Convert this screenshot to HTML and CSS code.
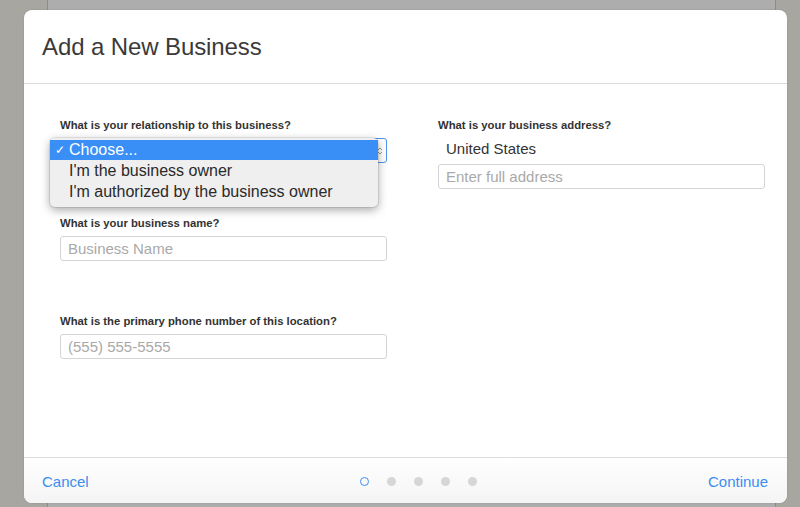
FILE: index.html
```html
<!DOCTYPE html>
<html>
<head>
<meta charset="utf-8">
<link rel="stylesheet" href="styles.css">
</head>
<body>
<div class="modal">
  <div class="modal-header">
    <h1 class="title">Add a New Business</h1>
  </div>
  <div class="modal-body">
    <div class="column">
      <div class="field">
        <label class="label">What is your relationship to this business?</label>
        <div class="select-wrap">
          <div class="select">
            <span class="select-arrows"><svg width="6" height="10" viewBox="0 0 6 10"><path d="M1 4 L3 2 L5 4 M1 6 L3 8 L5 6" fill="none" stroke="#999" stroke-width="1"/></svg></span>
          </div>
          <ul class="dropdown">
            <li class="option selected"><span class="check">✓</span>Choose...</li>
            <li class="option">I'm the business owner</li>
            <li class="option">I'm authorized by the business owner</li>
          </ul>
        </div>
      </div>
      <div class="field">
        <label class="label">What is your business name?</label>
        <input class="input" type="text" placeholder="Business Name">
      </div>
      <div class="field">
        <label class="label">What is the primary phone number of this location?</label>
        <input class="input" type="text" placeholder="(555) 555-5555">
      </div>
    </div>
    <div class="column">
      <div class="field">
        <label class="label">What is your business address?</label>
        <div class="country">United States</div>
        <input class="input" type="text" placeholder="Enter full address">
      </div>
    </div>
  </div>
  <div class="modal-footer">
    <a class="link">Cancel</a>
    <div class="dots">
      <span class="dot current"></span>
      <span class="dot"></span>
      <span class="dot"></span>
      <span class="dot"></span>
      <span class="dot"></span>
    </div>
    <a class="link">Continue</a>
  </div>
</div>
</body>
</html>
```
FILE: styles.css
```css
html, body {
  margin: 0;
  padding: 0;
}
body {
  width: 800px;
  height: 507px;
  overflow: hidden;
  font-family: "Liberation Sans", Arial, sans-serif;
  background: linear-gradient(to right, #a8a6a1 0 47px, #8e8c88 47px 48px, #adadad 48px 775px, #8e8c88 775px 776px, #a8a6a1 776px);
  padding-top: 10px;
  box-sizing: border-box;
}
.modal {
  margin-left: 24px;
  width: 763px;
  height: 493px;
  background: #fff;
  border-radius: 8px;
  display: flex;
  flex-direction: column;
  box-shadow: 0 0 2px rgba(0,0,0,0.15);
}
.modal-header {
  height: 73px;
  border-bottom: 1px solid #dcdcdc;
  display: flex;
  align-items: center;
  padding-left: 18px;
}
.title {
  margin: 0;
  font-size: 24px;
  font-weight: 400;
  color: #3a3a3a;
  letter-spacing: -0.1px;
}
.modal-body {
  flex: 1;
  display: grid;
  grid-template-columns: 327px 327px;
  column-gap: 51px;
  padding: 34px 22px 0 36px;
}
.column {
  display: flex;
  flex-direction: column;
  gap: 53px;
}
.field {
  display: flex;
  flex-direction: column;
}
.label {
  font-size: 11.3px;
  font-weight: 700;
  line-height: 14px;
  color: #333;
  margin-bottom: 6px;
}
.select-wrap {
  position: relative;
  height: 25px;
}
.select {
  height: 25px;
  box-sizing: border-box;
  border: 1px solid #4c96ee;
  border-radius: 3px;
  display: flex;
  justify-content: flex-end;
  align-items: center;
  padding-right: 3px;
}
.select-arrows {
  display: flex;
}
.dropdown {
  position: absolute;
  left: -10px;
  top: 0;
  width: 328px;
  margin: 0;
  padding: 2px 0 5px;
  list-style: none;
  background: #efefef;
  border-radius: 5px;
  box-shadow: 0 3px 10px rgba(0,0,0,0.35), 0 0 0 1px rgba(0,0,0,0.08);
}
.option {
  height: 21px;
  line-height: 21px;
  font-size: 16px;
  color: #2a2a2a;
  padding-left: 19px;
  position: relative;
}
.option.selected {
  background: #3a8ff7;
  color: #fff;
  height: 20px;
  line-height: 20px;
}
.check {
  position: absolute;
  left: 5px;
  font-size: 12px;
}
.input {
  height: 25px;
  box-sizing: border-box;
  border: 1px solid #d4d4d4;
  border-radius: 3px;
  padding: 0 7px;
  font-family: "Liberation Sans", Arial, sans-serif;
  font-size: 15px;
  color: #333;
  outline: none;
  margin: 0;
}
.input::placeholder {
  color: #a9a9a9;
}
.country {
  font-size: 15px;
  color: #333;
  padding-left: 8px;
  line-height: 18px;
  margin-top: 2px;
  margin-bottom: 6px;
}
.modal-footer {
  height: 46px;
  box-sizing: border-box;
  padding: 2px 19px 0 18px;
  border-top: 1px solid #dcdcdc;
  border-radius: 0 0 8px 8px;
  background: linear-gradient(#fff, #f4f4f4);
  display: flex;
  align-items: center;
  justify-content: space-between;
}
.link {
  font-size: 15px;
  color: #3b8df0;
  cursor: pointer;
}
.dots {
  display: flex;
  gap: 18px;
  align-items: center;
  margin-left: 40px;
}
.dot {
  width: 9px;
  height: 9px;
  border-radius: 50%;
  background: #d6d6d6;
  box-sizing: border-box;
}
.dot.current {
  background: transparent;
  border: 1.5px solid #3b8df0;
}
```
